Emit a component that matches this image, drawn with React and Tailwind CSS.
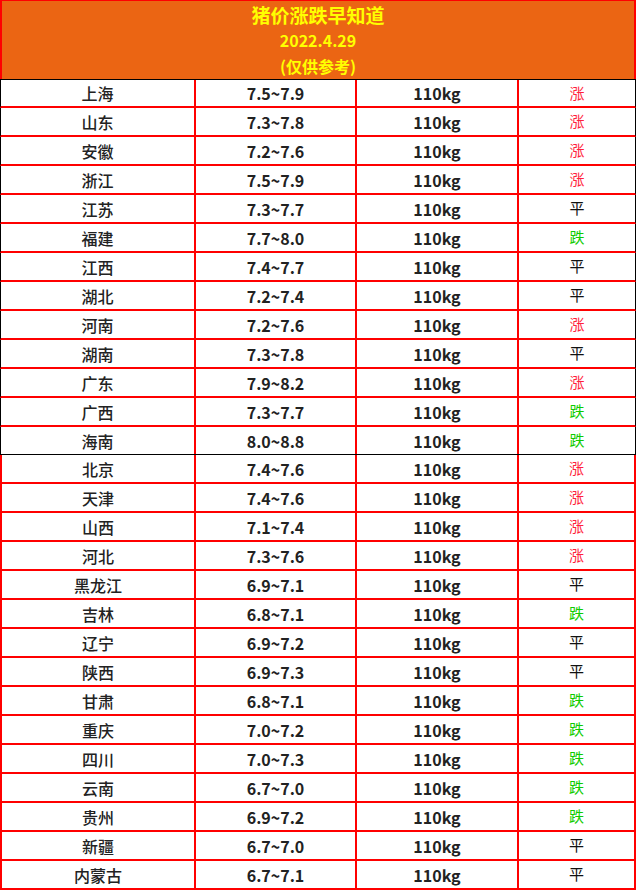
import React from "react";

const rows = [
  ["上海", "7.5~7.9", "涨"],
  ["山东", "7.3~7.8", "涨"],
  ["安徽", "7.2~7.6", "涨"],
  ["浙江", "7.5~7.9", "涨"],
  ["江苏", "7.3~7.7", "平"],
  ["福建", "7.7~8.0", "跌"],
  ["江西", "7.4~7.7", "平"],
  ["湖北", "7.2~7.4", "平"],
  ["河南", "7.2~7.6", "涨"],
  ["湖南", "7.3~7.8", "平"],
  ["广东", "7.9~8.2", "涨"],
  ["广西", "7.3~7.7", "跌"],
  ["海南", "8.0~8.8", "跌"],
  ["北京", "7.4~7.6", "涨"],
  ["天津", "7.4~7.6", "涨"],
  ["山西", "7.1~7.4", "涨"],
  ["河北", "7.3~7.6", "涨"],
  ["黑龙江", "6.9~7.1", "平"],
  ["吉林", "6.8~7.1", "跌"],
  ["辽宁", "6.9~7.2", "平"],
  ["陕西", "6.9~7.3", "平"],
  ["甘肃", "6.8~7.1", "跌"],
  ["重庆", "7.0~7.2", "跌"],
  ["四川", "7.0~7.3", "跌"],
  ["云南", "6.7~7.0", "跌"],
  ["贵州", "6.9~7.2", "跌"],
  ["新疆", "6.7~7.0", "平"],
  ["内蒙古", "6.7~7.1", "平"],
];

const trendColor = {
  涨: "text-[#ff1f3d]",
  跌: "text-[#10cc00]",
  平: "text-[#111111]",
};

function Row({ row, index }) {
  const [name, price, trend] = row;
  const top = index < 13;
  let rowBorder;
  if (index === 0) {
    rowBorder = "border-t border-x border-b-2 border-t-black border-x-black border-b-[#ff0000] h-[29px]";
  } else if (index === 12) {
    rowBorder = "border-x border-b border-x-black border-b-black h-[28px]";
  } else if (top) {
    rowBorder = "border-x border-b-2 border-x-black border-b-[#ff0000] h-[29px]";
  } else {
    rowBorder = "border-x-2 border-b-2 border-[#ff0000] h-[29px]";
  }
  const cols = top
    ? "grid-cols-[195px_161px_162px_1fr]"
    : "grid-cols-[194px_161px_162px_1fr]";
  return (
    <div className={`grid ${cols} ${rowBorder}`}>
      <div className="flex items-center justify-center border-r-2 border-[#ff0000] text-[16px] font-medium text-[#222222]">
        {name}
      </div>
      <div className="flex items-center justify-center border-r-2 border-[#ff0000] text-[16px] font-bold text-[#222222]">
        {price}
      </div>
      <div className="flex items-center justify-center border-r-2 border-[#ff0000] text-[16px] font-bold text-[#222222]">
        110kg
      </div>
      <div className={`flex items-center justify-center text-[15px] ${trendColor[trend]}`}>
        {trend}
      </div>
    </div>
  );
}

export default function App() {
  return (
    <div
      className="w-[639px] h-[894px] bg-white"
      style={{ fontFamily: '"Noto Sans CJK SC", "Noto Sans", sans-serif' }}
    >
      <div className="w-[636px]">
        <div className="h-[79px] bg-[#eb6513] border-t border-x-2 border-[#ff0000] flex flex-col items-center text-[#ffff00] font-bold">
          <div className="text-[19px] leading-[24px] mt-[2px]">猪价涨跌早知道</div>
          <div className="text-[16px] leading-[20px] mt-[3px]">2022.4.29</div>
          <div className="text-[16px] leading-[20px] mt-[6px]">(仅供参考)</div>
        </div>
        {rows.map((row, i) => (
          <Row key={row[0]} row={row} index={i} />
        ))}
      </div>
    </div>
  );
}
